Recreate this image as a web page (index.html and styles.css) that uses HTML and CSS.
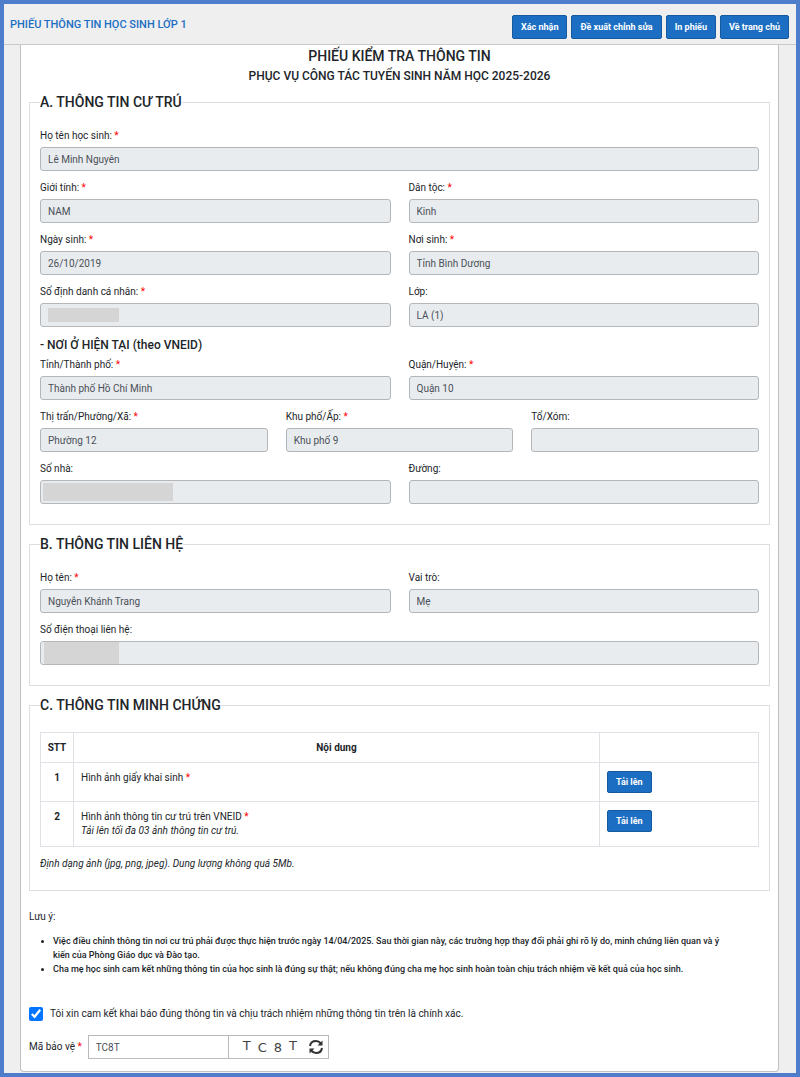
FILE: index.html
```
<!DOCTYPE html>
<html lang="vi">
<head>
<meta charset="UTF-8">
<meta name="viewport" content="width=device-width, initial-scale=1.0">
<title>Phiếu thông tin học sinh lớp 1</title>
<link rel="stylesheet" href="styles.css">
</head>

<body>

<header>
<a class="brand" href="#">PHIẾU THÔNG TIN HỌC SINH LỚP 1</a>
<div class="actions">
  <button type="button" class="btn">Xác nhận</button>
  <button type="button" class="btn">Đề xuất chỉnh sửa</button>
  <button type="button" class="btn">In phiếu</button>
  <button type="button" class="btn">Về trang chủ</button>
</div>
</header>

<main class="card">

<h1>PHIẾU KIỂM TRA THÔNG TIN</h1>
<h2>PHỤC VỤ CÔNG TÁC TUYỂN SINH NĂM HỌC 2025-2026</h2>

<form>

<!-- A -->
<fieldset>
<legend>A. THÔNG TIN CƯ TRÚ</legend>

<div class="row">
  <div class="field">
    <label for="hoten">Họ tên học sinh: <span class="req">*</span></label>
    <input type="text" id="hoten" value="Lê Minh Nguyên" readonly>
  </div>
</div>

<div class="row">
  <div class="field">
    <label for="gioitinh">Giới tính: <span class="req">*</span></label>
    <input type="text" id="gioitinh" value="NAM" readonly>
  </div>
  <div class="field">
    <label for="dantoc">Dân tộc: <span class="req">*</span></label>
    <input type="text" id="dantoc" value="Kinh" readonly>
  </div>
</div>

<div class="row">
  <div class="field">
    <label for="ngaysinh">Ngày sinh: <span class="req">*</span></label>
    <input type="text" id="ngaysinh" value="26/10/2019" readonly>
  </div>
  <div class="field">
    <label for="noisinh">Nơi sinh: <span class="req">*</span></label>
    <input type="text" id="noisinh" value="Tỉnh Bình Dương" readonly>
  </div>
</div>

<div class="row">
  <div class="field">
    <label for="dinhdanh">Số định danh cá nhân: <span class="req">*</span></label>
    <input type="text" id="dinhdanh" readonly>
    <span class="mask mask-id"></span>
  </div>
  <div class="field">
    <label for="lop">Lớp:</label>
    <input type="text" id="lop" value="LÁ (1)" readonly>
  </div>
</div>

<h3>- NƠI Ở HIỆN TẠI (theo VNEID)</h3>

<div class="row">
  <div class="field">
    <label for="tinh">Tỉnh/Thành phố: <span class="req">*</span></label>
    <input type="text" id="tinh" value="Thành phố Hồ Chí Minh" readonly>
  </div>
  <div class="field">
    <label for="quan">Quận/Huyện: <span class="req">*</span></label>
    <input type="text" id="quan" value="Quận 10" readonly>
  </div>
</div>

<div class="row">
  <div class="field">
    <label for="phuong">Thị trấn/Phường/Xã: <span class="req">*</span></label>
    <input type="text" id="phuong" value="Phường 12" readonly>
  </div>
  <div class="field">
    <label for="khupho">Khu phố/Ấp: <span class="req">*</span></label>
    <input type="text" id="khupho" value="Khu phố 9" readonly>
  </div>
  <div class="field">
    <label for="to">Tổ/Xóm:</label>
    <input type="text" id="to" readonly>
  </div>
</div>

<div class="row">
  <div class="field">
    <label for="sonha">Số nhà:</label>
    <input type="text" id="sonha" readonly>
    <span class="mask mask-address"></span>
  </div>
  <div class="field">
    <label for="duong">Đường:</label>
    <input type="text" id="duong" readonly>
  </div>
</div>
</fieldset>

<!-- B -->
<fieldset>
<legend>B. THÔNG TIN LIÊN HỆ</legend>

<div class="row">
  <div class="field">
    <label for="lienhe">Họ tên: <span class="req">*</span></label>
    <input type="text" id="lienhe" value="Nguyễn Khánh Trang" readonly>
  </div>
  <div class="field">
    <label for="vaitro">Vai trò:</label>
    <input type="text" id="vaitro" value="Mẹ" readonly>
  </div>
</div>

<div class="row">
  <div class="field">
    <label for="sdt">Số điện thoại liên hệ:</label>
    <input type="text" id="sdt" readonly>
    <span class="mask mask-phone"></span>
  </div>
</div>
</fieldset>

<!-- C -->
<fieldset>
<legend>C. THÔNG TIN MINH CHỨNG</legend>

<table>
<thead>
<tr>
  <th class="col-stt">STT</th>
  <th>Nội dung</th>
  <th class="col-upload"></th>
</tr>
</thead>
<tbody>
<tr>
  <th>1</th>
  <td>Hình ảnh giấy khai sinh <span class="req">*</span></td>
  <td><button type="button" class="btn btn-upload">Tải lên</button></td>
</tr>
<tr>
  <th>2</th>
  <td>Hình ảnh thông tin cư trú trên VNEID <span class="req">*</span><br><em>Tải lên tối đa 03 ảnh thông tin cư trú.</em></td>
  <td><button type="button" class="btn btn-upload">Tải lên</button></td>
</tr>
</tbody>
</table>

<p class="format"><em>Định dạng ảnh (jpg, png, jpeg). Dung lượng không quá 5Mb.</em></p>
</fieldset>

<p class="note">Lưu ý:</p>
<ul>
  <li>Việc điều chỉnh thông tin nơi cư trú phải được thực hiện trước ngày 14/04/2025. Sau thời gian này, các trường hợp thay đổi phải ghi rõ lý do, minh chứng liên quan và ý kiến của Phòng Giáo dục và Đào tạo.</li>
  <li>Cha mẹ học sinh cam kết những thông tin của học sinh là đúng sự thật; nếu không đúng cha mẹ học sinh hoàn toàn chịu trách nhiệm về kết quả của học sinh.</li>
</ul>

<div class="commit">
  <input type="checkbox" id="camket" checked>
  <label for="camket">Tôi xin cam kết khai báo đúng thông tin và chịu trách nhiệm những thông tin trên là chính xác.</label>
</div>

<div class="captcha">
  <label for="mabaove">Mã bảo vệ <span class="req">*</span></label>
  <div class="captcha-group">
    <input type="text" id="mabaove" value="TC8T">
    <div class="captcha-code"><span>T</span><span class="low">C</span><span class="low">8</span><span>T</span></div>
    <button type="button" class="refresh" aria-label="Đổi mã">
      <svg viewBox="0 0 16 16" width="16" height="16" fill="none" stroke="#333" stroke-width="2">
        <path d="M2 7 C2.500 3.500 5 2 8 2 C10 2 11.500 2.800 13 4.500"/>
        <path d="M14 9 C13.500 12.500 11 14 8 14 C6 14 4.500 13.200 3 11.500"/>
        <path d="M14.500 1.500 V6.500 H9.500 Z" fill="#333" stroke="none"/>
        <path d="M1.500 14.500 V9.500 H6.500 Z" fill="#333" stroke="none"/>
      </svg>
    </button>
  </div>
</div>

</form>

</main>

</body>
</html>
```
FILE: styles.css
```
*{
    box-sizing:border-box;
}

body{
    margin:0;
    min-height:100vh;
    border:4px solid #4f7ccb;
    background:#efeff0;
    color:#212529;
    font-family:Roboto, sans-serif;
    font-size:10px;
    line-height:14px;
}

/* HEADER */
header{
    display:flex;
    justify-content:space-between;
    align-items:center;
    height:41px;
    padding:6px 7px 0 6px;
    border-bottom:1px solid #c8cacc;
}

.brand{
    padding-bottom:4px;
    color:#1b6ec2;
    font-size:11px;
    font-weight:500;
    text-decoration:none;
}

.actions{
    display:flex;
    gap:4px;
}

.btn{
    height:24px;
    padding:0 8px;
    border:1px solid #155a9f;
    border-radius:2px;
    background:#1b6ec2;
    color:white;
    font:700 9px Roboto, sans-serif;
}

.btn-upload{
    display:block;
    height:22px;
}

/* CARD */
.card{
    margin:0 17px 0 16px;
    padding:1px 8px 12px;
    background:white;
    border:1px solid #bfc1c4;
    border-top:none;
    border-radius:0 0 4px 4px;
}

h1, h2, h3{
    margin:0;
    font-weight:500;
    text-align:center;
}

h1{
    font-size:14px;
    line-height:20px;
}

h2{
    font-size:12px;
    line-height:20px;
    margin-bottom:7px;
}

h3{
    margin-bottom:5px;
    font-size:12px;
    line-height:16px;
    text-align:left;
}

fieldset{
    min-width:0;
    margin:0 0 10px;
    padding:18px 10px 10px;
    border:1px solid #dcdfe2;
}

legend{
    padding:0;
    font-size:14px;
    font-weight:500;
    line-height:18px;
}

/* FORM */
.row{
    display:flex;
    gap:18px;
    margin-bottom:10px;
}

.field{
    flex:1;
    min-width:0;
    position:relative;
}

.field label{
    display:block;
    height:18px;
}

.req{
    color:red;
}

.field input{
    display:block;
    width:100%;
    height:24px;
    padding:0 7px;
    border:1px solid #b4b7ba;
    border-radius:3px;
    background:#e9ecef;
    color:#495057;
    font:10px Roboto, sans-serif;
}

.mask{
    position:absolute;
    background:#d5d5d5;
}

.mask-id{
    left:8px;
    bottom:5px;
    width:71px;
    height:14px;
}

.mask-address{
    left:3px;
    bottom:3px;
    width:130px;
    height:18px;
}

.mask-phone{
    left:4px;
    bottom:1px;
    width:75px;
    height:22px;
}

/* TABLE */
table{
    width:100%;
    border-collapse:collapse;
    table-layout:fixed;
}

th, td{
    padding:8px 7px;
    border:1px solid #dee2e6;
    text-align:left;
    vertical-align:top;
}

th{
    padding:8px 0 7px;
    font-weight:700;
    text-align:center;
}

.col-stt{
    width:33px;
}

.col-upload{
    width:159px;
}

.format{
    margin:10px 0 9px;
}

.note{
    margin:19px 0 10px;
}

ul{
    margin:0;
    padding:0 40px 0 24px;
    font-size:9px;
    font-weight:500;
}

.commit{
    display:flex;
    align-items:center;
    gap:7px;
    margin-top:31px;
}

.commit input{
    width:14px;
    height:14px;
    margin:0;
    accent-color:#0075ff;
}

/* CAPTCHA */
.captcha{
    display:flex;
    align-items:center;
    gap:6px;
    margin-top:14px;
}

.captcha-group{
    display:flex;
    align-items:center;
    height:24px;
    border:1px solid #b9bcbf;
}

.captcha-group input{
    width:140px;
    height:22px;
    padding:0 7px;
    border:none;
    border-right:1px solid #b9bcbf;
    color:#495057;
    font:10px Roboto, sans-serif;
}

.captcha-code{
    display:flex;
    gap:7px;
    padding:0 11px 0 14px;
    color:#444;
    font:13px/12px "DejaVu Sans", sans-serif;
}

.captcha-code .low{
    padding-top:2px;
}

.refresh{
    display:flex;
    padding:0 4px 0 0;
    border:none;
    background:none;
}
```
